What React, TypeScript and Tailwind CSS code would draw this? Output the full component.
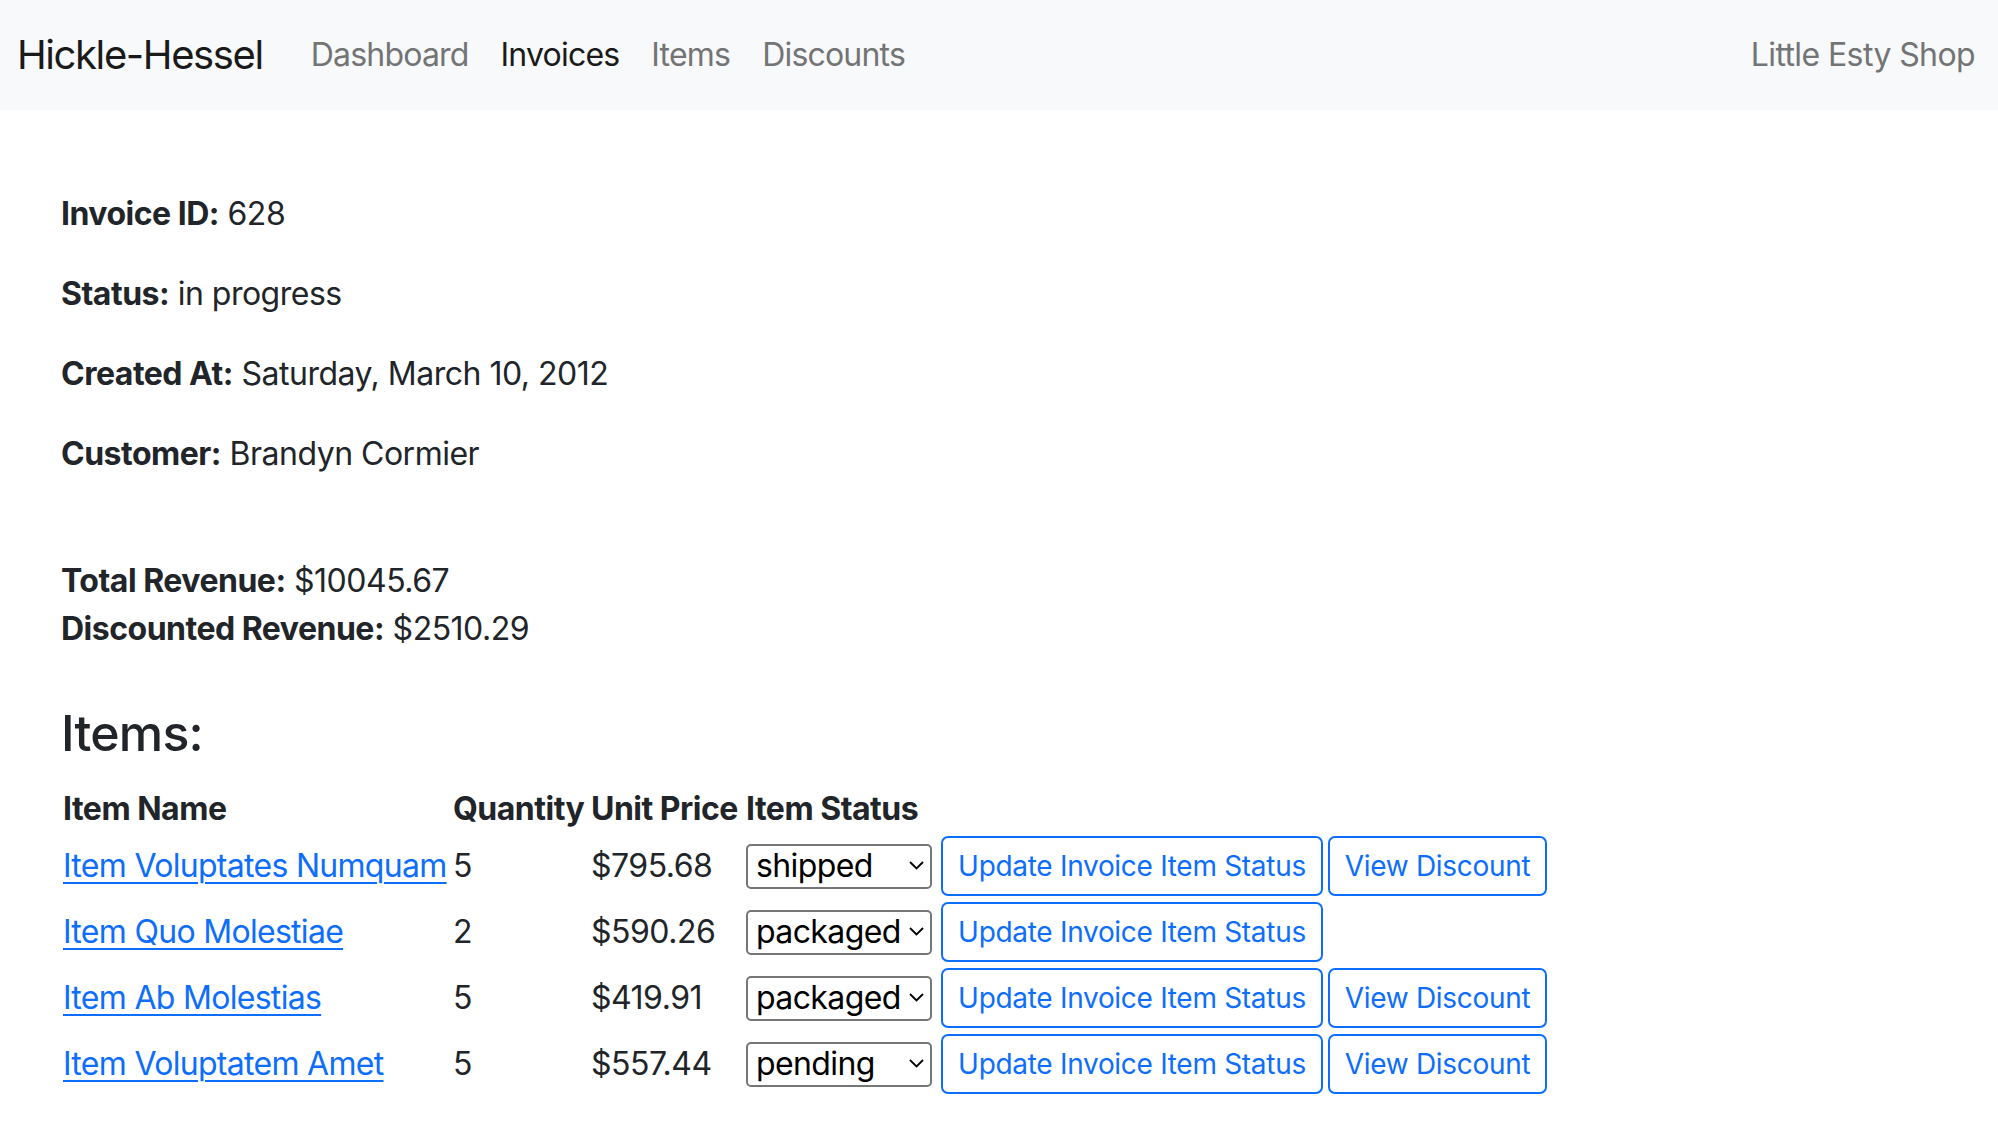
import { ChangeEvent, useState } from "react";

type InvoiceItem = {
  name: string;
  quantity: number;
  unitPrice: string;
  status: string;
  hasDiscount: boolean;
};

const items: InvoiceItem[] = [
  { name: "Item Voluptates Numquam", quantity: 5, unitPrice: "$795.68", status: "shipped", hasDiscount: true },
  { name: "Item Quo Molestiae", quantity: 2, unitPrice: "$590.26", status: "packaged", hasDiscount: false },
  { name: "Item Ab Molestias", quantity: 5, unitPrice: "$419.91", status: "packaged", hasDiscount: true },
  { name: "Item Voluptatem Amet", quantity: 5, unitPrice: "$557.44", status: "pending", hasDiscount: true },
];

const statuses = ["pending", "packaged", "shipped"];

function StatusSelect({ value }: { value: string }) {
  const [status, setStatus] = useState(value);

  return (
    <div className="relative w-[186px]">
      <select
        value={status}
        onChange={(e: ChangeEvent<HTMLSelectElement>) => setStatus(e.target.value)}
        className="appearance-none w-[186px] h-[45px] border-2 border-[#767676] rounded-[5px] bg-white pl-[8px] pr-[18px] text-[32px] leading-[40px] tracking-[-0.6px] text-black outline-none"
      >
        {statuses.map((s) => (
          <option key={s} value={s}>
            {s}
          </option>
        ))}
      </select>
      <svg
        className="pointer-events-none absolute right-[8px] top-[19px] w-[15px] h-[9px]"
        viewBox="0 0 15 9"
        fill="none"
        stroke="#000"
        strokeWidth={1.8}
      >
        <polyline points="1,1 7.5,7.5 14,1" />
      </svg>
    </div>
  );
}

function Navbar() {
  return (
    <nav className="flex items-center h-[110px] bg-[#f8f9fa] pl-[17px] pr-[23px]">
      <a href="#" className="text-[40px] text-[#1a1a1a] mr-[32px] tracking-[-1.4px]">
        Hickle-Hessel
      </a>
      <div className="flex items-center tracking-[-0.8px]">
        <a href="#" className="px-[16px] text-[32px] text-[#737475]">Dashboard</a>
        <a href="#" className="px-[16px] text-[32px] text-[#1a1a1a]">Invoices</a>
        <a href="#" className="px-[16px] text-[32px] text-[#737475]">Items</a>
        <a href="#" className="px-[16px] text-[32px] text-[#737475]">Discounts</a>
      </div>
      <span className="ml-auto text-[32px] text-[#737475] tracking-[-0.6px]">Little Esty Shop</span>
    </nav>
  );
}

export default function App() {
  return (
    <div className="min-h-screen bg-white font-['Inter',sans-serif] text-[#212529] text-[32px] leading-[48px] tracking-[-0.5px]">
      <Navbar />

      <main className="pl-[61px] pt-[80px] pb-[30px]">
        <p className="mb-[32px]"><b className="font-bold">Invoice ID:</b> 628</p>
        <p className="mb-[32px]"><b className="font-bold">Status:</b> in progress</p>
        <p className="mb-[32px]"><b className="font-bold">Created At:</b> Saturday, March 10, 2012</p>
        <p className="mb-[79px]"><b className="font-bold">Customer:</b> Brandyn Cormier</p>

        <p><b className="font-bold">Total Revenue:</b> $10045.67</p>
        <p><b className="font-bold">Discounted Revenue:</b> $2510.29</p>

        <h3 className="mt-[51px] mb-[23px] text-[50px] leading-[58px] font-medium tracking-[-0.8px]">Items:</h3>

        <table className="table-fixed border-collapse">
          <thead>
            <tr className="text-left whitespace-nowrap">
              <th className="w-[390px] px-[2px] font-bold">Item Name</th>
              <th className="w-[138px] px-[2px] font-bold">Quantity</th>
              <th className="w-[155px] px-[2px] font-bold">Unit Price</th>
              <th className="w-[195px] px-[2px] font-bold">Item Status</th>
              <th className="px-[2px]"></th>
            </tr>
          </thead>
          <tbody>
            {items.map((item) => (
              <tr key={item.name}>
                <td className="px-[2px] py-[3px] align-middle">
                  <a href="#" className="text-[#0d6efd] underline underline-offset-[5px] decoration-[2px] whitespace-nowrap tracking-[-0.7px]">
                    {item.name}
                  </a>
                </td>
                <td className="px-[2px] py-[3px] align-middle">{item.quantity}</td>
                <td className="px-[2px] py-[3px] align-middle">{item.unitPrice}</td>
                <td className="px-[2px] py-[3px] align-middle">
                  <StatusSelect value={item.status} />
                </td>
                <td className="px-[2px] py-[3px] align-middle">
                  <div className="flex gap-[5px] tracking-[-0.3px]">
                    <button className="w-[382px] h-[60px] border-2 border-[#0d6efd] rounded-[7px] bg-white text-[28px] text-[#0d6efd]">
                      Update Invoice Item Status
                    </button>
                    {item.hasDiscount && (
                      <button className="w-[219px] h-[60px] border-2 border-[#0d6efd] rounded-[7px] bg-white text-[28px] text-[#0d6efd]">
                        View Discount
                      </button>
                    )}
                  </div>
                </td>
              </tr>
            ))}
          </tbody>
        </table>
      </main>
    </div>
  );
}
